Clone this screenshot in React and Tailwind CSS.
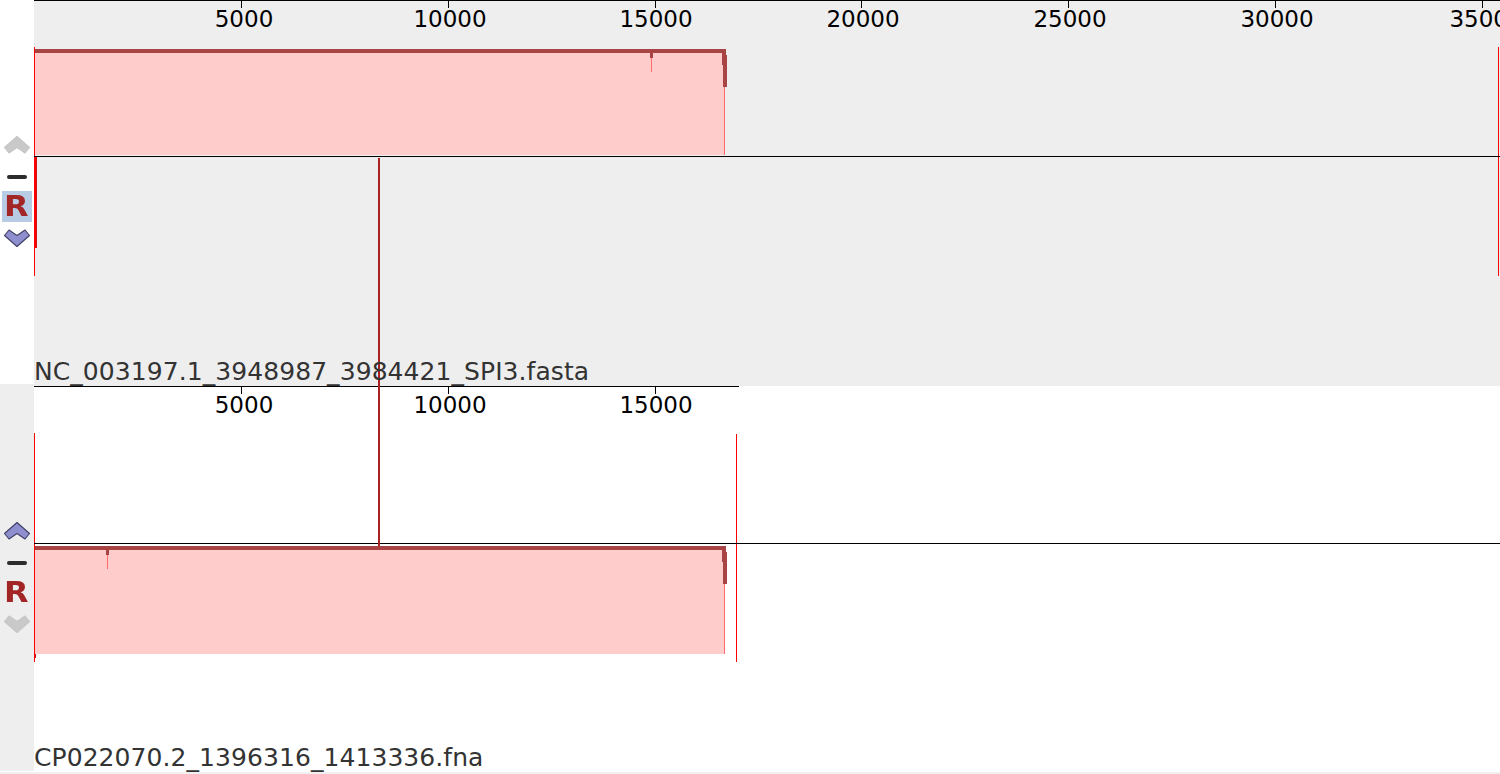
const topTicks = [241, 448, 655, 861, 1068, 1275, 1482];
const topLabels = [
    { x: 244, text: '5000' },
    { x: 450, text: '10000' },
    { x: 656, text: '15000' },
    { x: 863, text: '20000' },
    { x: 1070, text: '25000' },
    { x: 1277, text: '30000' },
    { x: 1486, text: '35000' },
];
const bottomTicks = [241, 448, 655];
const bottomLabels = topLabels.slice(0, 3);

const Chevron = ({ up, active }) => (
    <svg width="28" height="20" viewBox="0 0 28 20" className={`blur-[0.4px] ${up ? '' : 'rotate-180'}`}>
        <path
            d="M1.5 12.5 L14 1.5 L26.5 12.5 L22 18 L14 12.5 L6 18 Z"
            fill={active ? '#8f8fd0' : '#c9c9c9'}
            stroke={active ? '#3f3f66' : '#c6c6c6'}
            strokeWidth="1.1"
            strokeLinejoin="round"
        />
    </svg>
);

const Controls = ({ upActive, downActive, selected }) => (
    <div className="w-[34px] shrink-0 flex flex-col items-center pr-px">
        <Chevron up active={upActive} />
        <div className="mt-[20px] w-[20px] h-[4px] bg-[#2c2c2c] rounded-sm blur-[0.5px]"></div>
        <div className={`mt-[12px] w-[30px] h-[31px] flex items-center justify-center ${selected ? 'bg-[#b7cce4]' : ''}`}>
            <span className="font-bold text-[29px] leading-none text-[#a32626] blur-[0.3px] scale-x-110">R</span>
        </div>
        <div className="mt-[6px]">
            <Chevron active={downActive} />
        </div>
    </div>
);

const Ruler = ({ labels }) => (
    <>
        {labels.map((l) => (
            <span
                key={l.text}
                className="absolute top-[4px] -translate-x-1/2 text-[23px] leading-[30px] text-black whitespace-nowrap"
                style={{ left: l.x - 34 }}
            >
                {l.text}
            </span>
        ))}
    </>
);

// one aligned block: header bar, pink body, end tail, notch, in page x minus 34
const Block = ({ y, notchX, bodyHeight }) => (
    <>
        <rect x="1" y={y + 4} width="690" height={bodyHeight} fill="#ffcccc" />
        <rect x="690" y={y + 38} width="1" height={bodyHeight - 34} fill="#ff6b6b" />
        <rect x="0" y={y} width="692" height="4" fill="#a84444" />
        <rect x="688" y={y + 4} width="4" height="12" fill="#a84444" />
        <rect x="689" y={y + 6} width="4" height="32" fill="#a84444" />
        <rect x={notchX} y={y + 3} width="3" height="6" fill="#a84444" />
        <rect x={notchX + 1} y={y + 9} width="1" height="14" fill="#ff6b6b" />
    </>
);

const App = () => {
    return (
        <div className="w-[1500px] h-[774px] overflow-hidden bg-white font-['DejaVu_Sans',sans-serif]">
            <div className="flex items-start h-[384px]">
                <div className="h-[384px] bg-white pt-[135px]">
                    <Controls downActive selected />
                </div>
                <div className="relative flex-1 h-[386px] bg-[#eeeeee]">
                    <svg width="1466" height="386" className="absolute left-0 top-0" shapeRendering="crispEdges">
                        <rect x="0" y="0" width="1466" height="1" fill="#000" />
                        {topTicks.map((t) => (
                            <rect key={t} x={t - 34} y="0" width="1" height="8" fill="#000" />
                        ))}
                        <Block y={49} notchX={616} bodyHeight={102} />
                        <rect x="0" y="47" width="1" height="229" fill="#ff0000" />
                        <rect x="1" y="157" width="1" height="91" fill="#ff0000" />
                        <rect x="2" y="157" width="1" height="91" fill="#d01010" />
                        <rect x="1464" y="47" width="1" height="229" fill="#ff0000" />
                        <rect x="0" y="156" width="1466" height="1" fill="#000" />
                        <rect x="344" y="158" width="2" height="228" fill="#aa2222" />
                    </svg>
                    <Ruler labels={topLabels} />
                    <span className="absolute left-0 bottom-0 translate-y-px text-[25px] tracking-[0.07px] leading-[30px] text-[#333333] whitespace-nowrap">
                        NC_003197.1_3948987_3984421_SPI3.fasta
                    </span>
                </div>
            </div>
            <div className="flex items-start h-[387px]">
                <div className="h-[387px] bg-[#eeeeee] pt-[137px]">
                    <Controls upActive />
                </div>
                <div className="relative flex-1 h-[385px] mt-[2px] bg-white">
                    <svg width="1466" height="385" className="absolute left-0 top-0" shapeRendering="crispEdges">
                        <rect x="0" y="0" width="705" height="1" fill="#000" />
                        {bottomTicks.map((t) => (
                            <rect key={t} x={t - 34} y="0" width="1" height="8" fill="#000" />
                        ))}
                        <Block y={160} notchX={72} bodyHeight={104} />
                        <rect x="1" y="268" width="1" height="4" fill="#d01010" />
                        <rect x="0" y="47" width="1" height="229" fill="#ff0000" />
                        <rect x="702" y="48" width="1" height="228" fill="#ff0000" />
                        <rect x="0" y="157" width="1466" height="1" fill="#000" />
                        <rect x="344" y="0" width="2" height="160" fill="#aa2222" />
                    </svg>
                    <Ruler labels={bottomLabels} />
                    <span className="absolute left-0 bottom-0 translate-y-[2px] text-[25px] tracking-[0.07px] leading-[30px] text-[#333333] whitespace-nowrap">
                        CP022070.2_1396316_1413336.fna
                    </span>
                </div>
            </div>
            <div className="h-px bg-white"></div>
            <div className="h-[2px] bg-[#f0f0f0]"></div>
        </div>
    );
};

export default App;
